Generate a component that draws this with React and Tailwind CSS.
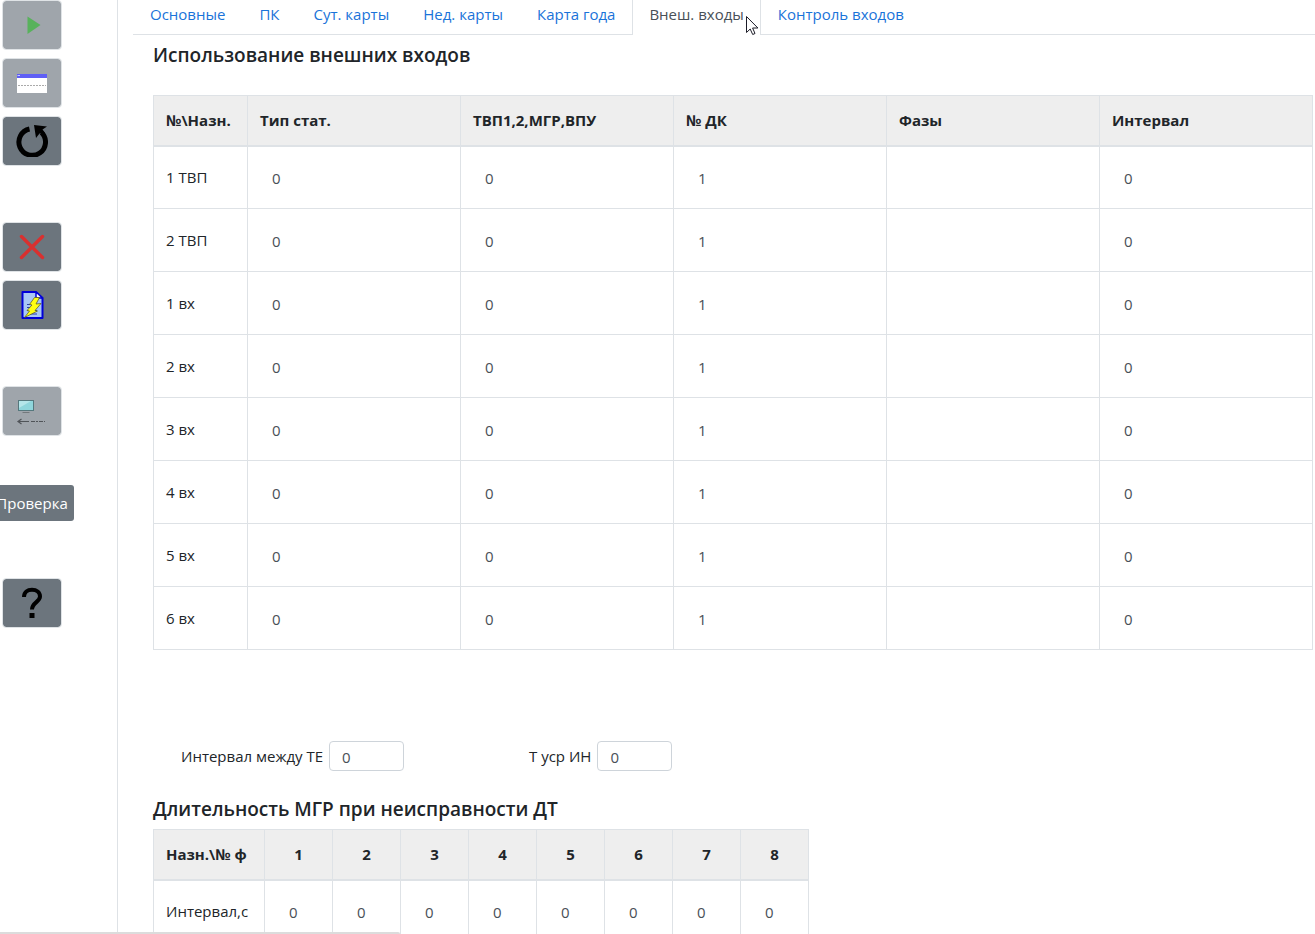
import { useState } from 'react';
import clsx from 'clsx';

const TABS = ['Основные', 'ПК', 'Сут. карты', 'Нед. карты', 'Карта года', 'Внеш. входы', 'Контроль входов'];
const COLUMNS = ['Тип стат.', 'ТВП1,2,МГР,ВПУ', '№ ДК', 'Фазы', 'Интервал'];
const ROWS = ['1 ТВП', '2 ТВП', '1 вх', '2 вх', '3 вх', '4 вх', '5 вх', '6 вх'];
const DEFAULTS = ['0', '0', '1', '', '0'];
const PHASES = [1, 2, 3, 4, 5, 6, 7, 8];

function PlayIcon() {
  return (
    <svg width="32" height="32" viewBox="0 0 32 32">
      <path d="M11.5 7.5 24.5 16 11.5 25Z" fill="#58b25c" />
    </svg>
  );
}

function WindowIcon() {
  return (
    <svg width="32" height="32" viewBox="0 0 32 32">
      <rect x="1" y="7" width="30" height="19" fill="#fff" />
      <rect x="1" y="7" width="30" height="4" fill="#5f5ff5" />
      <path d="M1.500 8.500h2.500" stroke="#c9c9ff" />
      <path d="M2 18.500h28" stroke="#aaa" strokeDasharray="2 1" />
    </svg>
  );
}

function ReloadIcon() {
  return (
    <svg width="32" height="32" viewBox="0 0 32 32">
      <path d="M13.500 4A13.300 13.300 0 1 0 25.500 7.500" fill="none" stroke="#000" strokeWidth="5" />
      <path d="M18 0 31 1.500 26.500 4.500 29 8 23.500 8.500 20 13Z" fill="#000" />
    </svg>
  );
}

function CrossIcon() {
  return (
    <svg width="32" height="32" viewBox="0 0 32 32">
      <path d="M5.500 5.500 26.500 26.500M26.500 5.500 5.500 26.500" stroke="#d9302f" strokeWidth="3.400" strokeLinecap="round" />
    </svg>
  );
}

function FlashPageIcon() {
  return (
    <svg width="32" height="32" viewBox="0 0 32 32">
      <path d="M6.500 3H20l6.500 6v20h-20Z" fill="#a9c8f5" stroke="#0000d8" strokeWidth="2" strokeLinejoin="round" />
      <path d="M20 3v6h6.500Z" fill="#fff" stroke="#0000d8" strokeWidth="1.500" strokeLinejoin="round" />
      <path d="M11 15.500h8M11 18.500h10M11 21.500h10M12 25h9" stroke="#2a3fb0" />
      <path d="M18.500 8.500h5L20 15l5-.5-6 7 2.500.5L8.500 28.500l5-6.500-2.500-.5 5-5.500-2.500-.5Z" fill="#ffff14" stroke="#55551a" strokeWidth=".7" />
    </svg>
  );
}

function MonitorIcon() {
  return (
    <svg width="32" height="32" viewBox="0 0 32 32">
      <rect x="2.500" y="5.500" width="15" height="10" fill="#8fd6dc" stroke="#55787d" />
      <path d="M3 6h12L3 13Z" fill="#b5e6ea" />
      <path d="M6.500 17.500h7" stroke="#73787c" />
      <path d="M2 26.500h11M5.500 24 2 26.500 5.500 29" fill="none" stroke="#505458" strokeWidth="1.200" />
      <path d="M15 26.500h14" stroke="#505458" strokeDasharray="4 1 2 1" />
    </svg>
  );
}

function HelpIcon() {
  return (
    <svg width="32" height="32" viewBox="0 0 32 32">
      <path d="M8 10C8 5 11.500 2.700 16 2.700s8 2.500 8 6.800c0 5.500-8 6-8 13" fill="none" stroke="#000" strokeWidth="4" />
      <rect x="13.500" y="26" width="5" height="5" fill="#000" />
    </svg>
  );
}

function ToolButton({ label, disabled, children }) {
  return (
    <button
      type="button"
      title={label}
      aria-label={label}
      disabled={disabled}
      className="flex h-12 w-[58px] items-center justify-center rounded-[3px] bg-[#6c757d] outline outline-[#dfe3e6] disabled:bg-[#9fa5ab]"
    >
      {children}
    </button>
  );
}

function Sidebar() {
  return (
    <aside className="w-[118px] shrink-0 border-r border-[#dee2e6] pt-px">
      <div className="flex w-16 flex-col items-center">
        <div className="flex flex-col gap-[10px]">
          <ToolButton label="Старт" disabled><PlayIcon /></ToolButton>
          <ToolButton label="Окно" disabled><WindowIcon /></ToolButton>
          <ToolButton label="Обновить"><ReloadIcon /></ToolButton>
        </div>
        <div className="mt-[58px] flex flex-col gap-[10px]">
          <ToolButton label="Удалить"><CrossIcon /></ToolButton>
          <ToolButton label="Записать"><FlashPageIcon /></ToolButton>
        </div>
        <div className="mt-[58px]">
          <ToolButton label="Загрузить" disabled><MonitorIcon /></ToolButton>
        </div>
        <button type="button" className="mt-[50px] h-9 shrink-0 rounded-[3px] bg-[#6c757d] px-1.5 text-white">Проверка</button>
        <div className="mt-[58px]">
          <ToolButton label="Справка"><HelpIcon /></ToolButton>
        </div>
      </div>
    </aside>
  );
}

function Tabs({ active, onSelect }) {
  return (
    <nav className="ml-[15px] flex border-b border-[#dee2e6]">
      {TABS.map((tab) => (
        <a
          key={tab}
          href="#"
          onClick={() => onSelect(tab)}
          className={clsx(
            'border-x px-4 pt-0.5 pb-2 whitespace-nowrap',
            tab === active ? '-mb-px border-[#dee2e6] bg-white text-[#495057]' : 'border-transparent text-[#1a73d9]'
          )}
        >
          {tab}
        </a>
      ))}
    </nav>
  );
}

function InputsTable() {
  return (
    <table className="w-full table-fixed border-collapse border border-[#dee2e6]">
      <thead className="bg-[#eee] text-left">
        <tr className="h-[50px] border-b-2 border-[#dee2e6]">
          <th className="w-[94px] border-r border-[#dee2e6] pl-3 whitespace-nowrap">№\Назн.</th>
          {COLUMNS.map((c) => (
            <th key={c} className="border-r border-[#dee2e6] px-3">{c}</th>
          ))}
        </tr>
      </thead>
      <tbody>
        {ROWS.map((row) => (
          <tr key={row} className="h-[63px]">
            <td className="border border-[#dee2e6] px-3">{row}</td>
            {DEFAULTS.map((value, i) => (
              <td key={i} className="border border-[#dee2e6] px-3">
                <input aria-label={`${row} ${COLUMNS[i]}`} defaultValue={value} className="h-[38px] w-full px-3 pt-0.5 text-[#495057] outline-none" />
              </td>
            ))}
          </tr>
        ))}
      </tbody>
    </table>
  );
}

function PhasesTable() {
  return (
    <table className="w-[656px] table-fixed border-collapse border border-[#dee2e6]">
      <thead className="bg-[#eee]">
        <tr className="h-[50px] border-b-2 border-[#dee2e6]">
          <th className="w-[111px] border-r border-[#dee2e6] pl-3 text-left whitespace-nowrap">Назн.\№ ф</th>
          {PHASES.map((n) => (
            <th key={n} className="border-r border-[#dee2e6]">{n}</th>
          ))}
        </tr>
      </thead>
      <tbody>
        <tr className="h-[63px]">
          <td className="border border-[#dee2e6] pl-3">Интервал,с</td>
          {PHASES.map((n) => (
            <td key={n} className="border border-[#dee2e6] px-3">
              <input aria-label={`Интервал, фаза ${n}`} defaultValue="0" className="h-[38px] w-full px-3 pt-0.5 text-[#495057] outline-none" />
            </td>
          ))}
        </tr>
      </tbody>
    </table>
  );
}

function Field({ id, label }) {
  return (
    <div className="flex items-center gap-1.5">
      <label htmlFor={id}>{label}</label>
      <input id={id} defaultValue="0" className="h-[30px] w-[75px] rounded border border-[#ced4da] px-3 pt-0.5 text-[#495057]" />
    </div>
  );
}

function Pointer() {
  return (
    <svg className="pointer-events-none absolute top-4 left-[746px]" width="13" height="20" viewBox="0 0 13 20">
      <path d="M.5.5v16l3.700-3.500 2.500 5.500 2.300-1L6.600 12h5.300Z" fill="#fff" stroke="#1c1c28" />
    </svg>
  );
}

export default function App() {
  const [active, setActive] = useState('Внеш. входы');

  return (
    <div className="relative flex h-screen overflow-hidden bg-white font-['Open_Sans','Noto_Sans',sans-serif] text-[15px] leading-6 text-[#212529]">
      <Sidebar />
      <main className="min-w-0 flex-1">
        <Tabs active={active} onSelect={setActive} />
        <div className="pt-2 pr-0.5 pl-[35px]">
          <h5 className="mb-7 text-[19px] leading-6 font-semibold">Использование внешних входов</h5>
          <InputsTable />
          <div className="mt-[91px] flex pl-7">
            <div className="w-[348px]">
              <Field id="te" label="Интервал между ТЕ" />
            </div>
            <Field id="usr" label="Т уср ИН" />
          </div>
          <h5 className="mt-[26px] mb-2 text-[19px] leading-6 font-semibold">Длительность МГР при неисправности ДТ</h5>
          <PhasesTable />
        </div>
      </main>
      <Pointer />
      <div className="absolute bottom-0 left-0 h-0.5 w-[400px] rounded-tr bg-[#dcdcdc]" />
    </div>
  );
}
